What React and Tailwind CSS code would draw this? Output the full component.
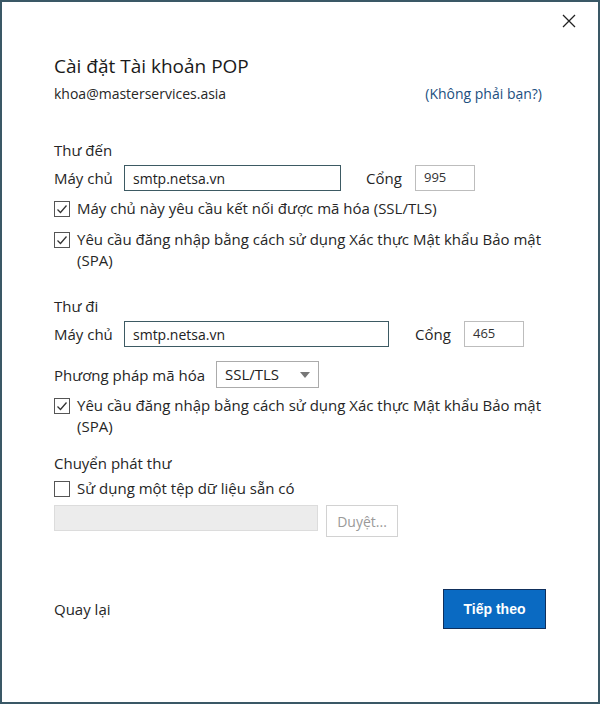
import React from 'react';

const font = { fontFamily: '"Open Sans", "Noto Sans", sans-serif' };

const Check = ({ checked }) => (
    <span className="flex items-center justify-center w-[16px] h-[16px] border border-[#555] bg-white shrink-0 mt-[3px]">
        {checked && (
            <svg width="12" height="12" viewBox="0 0 12 12" fill="none" stroke="#333" strokeWidth="1.3">
                <path d="M1.5 6.5 L4.5 9.5 L10.5 2.5" />
            </svg>
        )}
    </span>
);

const CheckRow = ({ checked, children, className = '' }) => (
    <div className={`flex items-start gap-[7px] ${className}`}>
        <Check checked={checked} />
        <span className="text-[15px] leading-[21px] text-[#262626]">{children}</span>
    </div>
);

const ServerRow = ({ host, port, hostWidth, gap, className = '' }) => (
    <div className={`flex items-center ${className}`}>
        <span className="w-[70px] text-[15px] leading-[22px] text-[#262626]">Máy chủ</span>
        <div className={`h-[26px] ${hostWidth} border border-[#3d5a63] flex items-center px-[8px] text-[14px] text-[#222]`}>
            {host}
        </div>
        <span className={`${gap} w-[49px] text-[15px] leading-[22px] text-[#262626]`}>Cổng</span>
        <div className="h-[26px] w-[60px] border border-[#bdbdbd] flex items-center px-[8px] text-[13px] text-[#333]">
            {port}
        </div>
    </div>
);

const App = () => {
    return (
        <div style={font} className="w-[600px] h-[704px] bg-white border-2 border-[#3a5866] flex flex-col">
            {/* close */}
            <div className="flex justify-end pt-[12px] pr-[22px] h-[50px]">
                <svg width="14" height="14" viewBox="0 0 14 14" stroke="#222" strokeWidth="1.3">
                    <path d="M1 1 L13 13 M13 1 L1 13" />
                </svg>
            </div>

            <div className="pl-[52px] pr-[56px] flex flex-col">
                <h1 className="text-[19px] leading-[28px] text-[#1a1a1a]">Cài đặt Tài khoản POP</h1>
                <div className="mt-[4px] flex justify-between text-[14px] leading-[20px]">
                    <span className="text-[#262626]">khoa@masterservices.asia</span>
                    <span className="text-[#1c4f80]">(Không phải bạn?)</span>
                </div>

                <div className="mt-[35px] text-[15px] leading-[22px] text-[#262626]">Thư đến</div>
                <ServerRow className="mt-[4px]" host="smtp.netsa.vn" port="995" hostWidth="w-[217px]" gap="ml-[25px]" />
                <CheckRow className="mt-[7px]" checked>Máy chủ này yêu cầu kết nối được mã hóa (SSL/TLS)</CheckRow>
                <CheckRow className="mt-[10px]" checked>
                    Yêu cầu đăng nhập bằng cách sử dụng Xác thực Mật khẩu Bảo mật (SPA)
                </CheckRow>

                <div className="mt-[24px] text-[15px] leading-[22px] text-[#262626]">Thư đi</div>
                <ServerRow className="mt-[4px]" host="smtp.netsa.vn" port="465" hostWidth="w-[265px]" gap="ml-[26px]" />
                <div className="mt-[14px] flex items-center">
                    <span className="w-[162px] text-[15px] leading-[22px] text-[#262626]">Phương pháp mã hóa</span>
                    <div className="h-[27px] w-[103px] border border-[#ababab] flex items-center justify-between pl-[8px] pr-[8px]">
                        <span className="text-[15px] text-[#222]">SSL/TLS</span>
                        <svg width="10" height="6" viewBox="0 0 10 6">
                            <path d="M0 0 L10 0 L5 6 Z" fill="#777" />
                        </svg>
                    </div>
                </div>
                <CheckRow className="mt-[7px]" checked>
                    Yêu cầu đăng nhập bằng cách sử dụng Xác thực Mật khẩu Bảo mật (SPA)
                </CheckRow>

                <div className="mt-[15px] text-[15px] leading-[22px] text-[#262626]">Chuyển phát thư</div>
                <CheckRow className="mt-[4px]">Sử dụng một tệp dữ liệu sẵn có</CheckRow>
                <div className="mt-[6px] flex items-start gap-[8px]">
                    <div className="h-[26px] w-[264px] bg-[#ececec] border border-[#dcdcdc]" />
                    <div className="h-[32px] w-[72px] border border-[#d2d2d2] flex items-center justify-center text-[14px] text-[#9a9a9a]">
                        Duyệt...
                    </div>
                </div>

                <div className="mt-[52px] -mr-[4px] flex items-center justify-between">
                    <span className="text-[15px] text-[#262626]">Quay lại</span>
                    <button
                        style={{ fontFamily: '"Liberation Sans", Arial, sans-serif' }}
                        className="h-[40px] w-[103px] bg-[#0a6ac2] border border-[#0f2f5c] text-white text-[14px] font-bold"
                    >
                        Tiếp theo
                    </button>
                </div>
            </div>
        </div>
    );
};

export default App;
